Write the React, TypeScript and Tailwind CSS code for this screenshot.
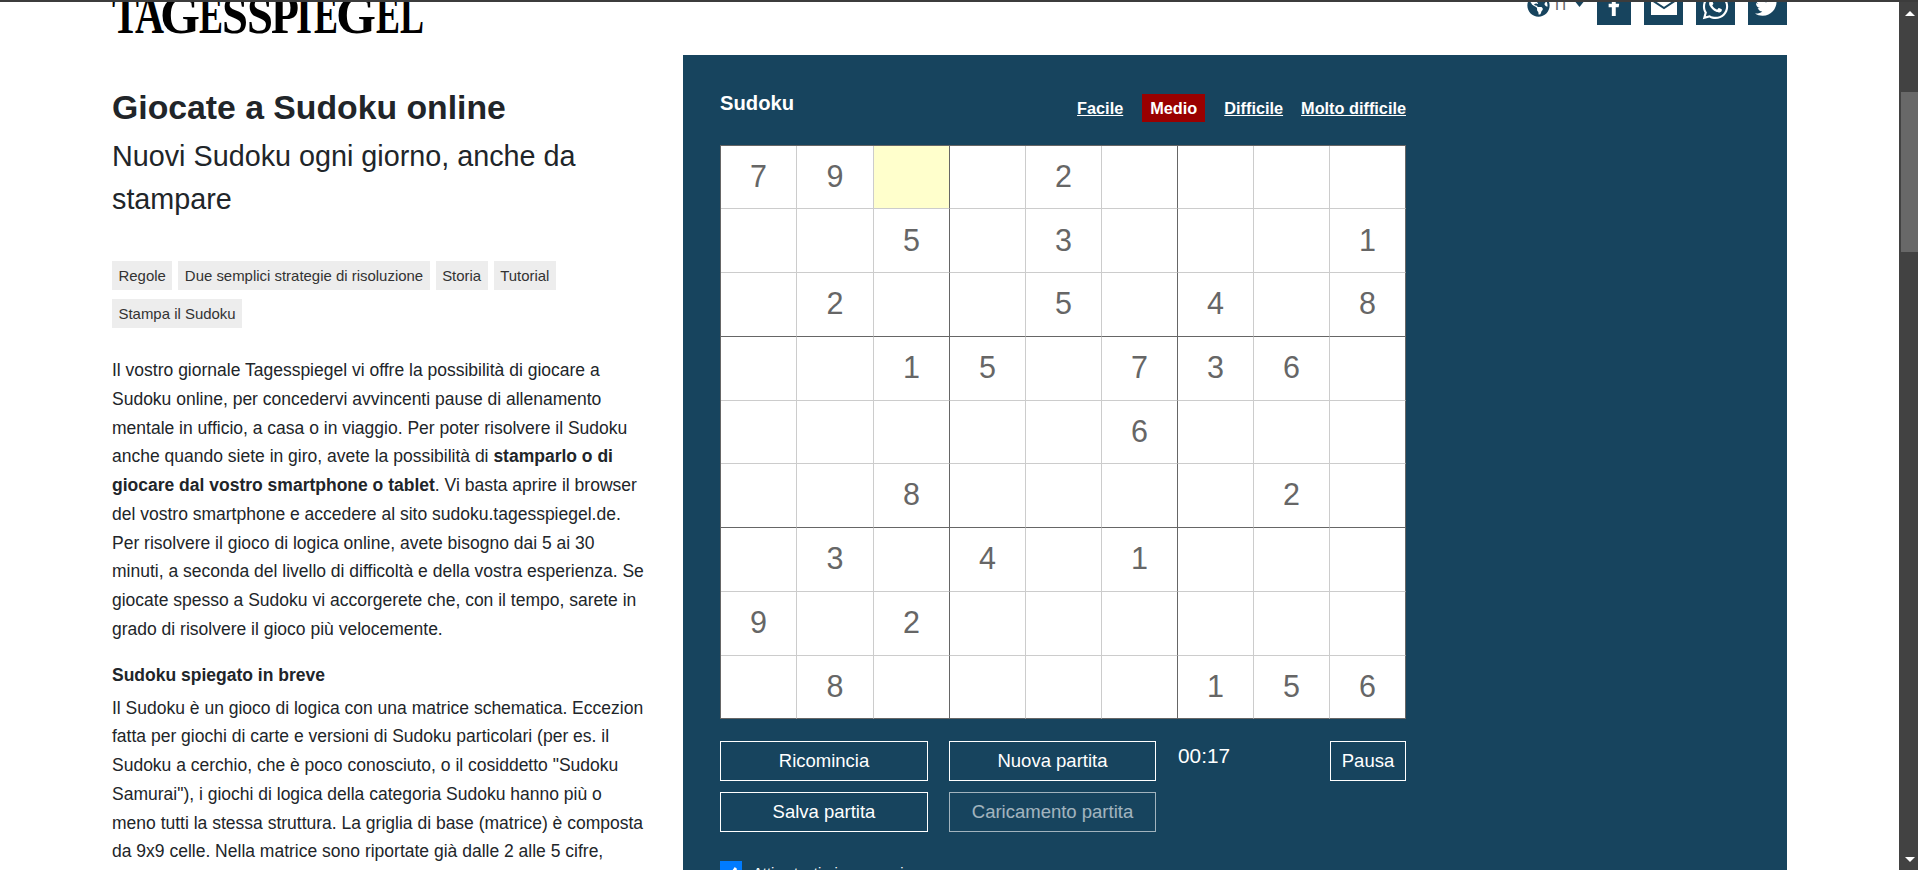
import React from "react";
import { FaFacebookF, FaGlobeAmericas, FaTwitter, FaWhatsapp } from "react-icons/fa";

const ROWS = [
  "79..2....",
  "..5.3...1",
  ".2..5.4.8",
  "..15.736.",
  ".....6...",
  "..8....2.",
  ".3.4.1...",
  "9.2......",
  ".8....156",
];

const TAGS = ["Regole", "Due semplici strategie di risoluzione", "Storia", "Tutorial", "Stampa il Sudoku"];

function Board() {
  return (
    <div className="mt-[21px] grid h-[574px] w-[686px] grid-cols-[76px_77px_76px_76px_76px_76px_76px_76px_76px] grid-rows-[63px_64px_64px_64px_63px_64px_64px_64px_63px] border-t border-l border-[#666] bg-white text-[30.5px] leading-none text-[#666]">
      {ROWS.map((row, r) =>
        row.split("").map((v, c) => (
          <div
            key={`${r}-${c}`}
            className={[
              "flex items-center justify-center border-r border-b",
              r === 1 ? "pb-[1px]" : "pb-[2px]",
              c % 3 === 2 ? "border-r-[#666]" : "border-r-[#ccc]",
              r % 3 === 2 ? "border-b-[#666]" : "border-b-[#ccc]",
              r === 0 && c === 2 ? "bg-[#ffffcc]" : "",
            ].join(" ")}
          >
            {v === "." ? "" : v}
          </div>
        ))
      )}
    </div>
  );
}

// Each letter of the wordmark with its left edge and its drawn width.
const WORDMARK: [string, number, number][] = [
  ["T", 0, 27],
  ["A", 23, 29],
  ["G", 48, 40],
  ["E", 87, 24],
  ["S", 110, 26],
  ["S", 135, 26],
  ["P", 159, 28],
  ["I", 184, 16],
  ["E", 202, 24],
  ["G", 224, 40],
  ["E", 264, 24],
  ["L", 288, 24],
];

function Logo() {
  return (
    <svg className="h-[40px] w-[320px]" viewBox="0 2 320 40">
      {WORDMARK.map(([ch, x, w], i) => (
        <text
          key={i}
          x={x}
          y="33"
          textLength={w}
          lengthAdjust="spacingAndGlyphs"
          fontFamily="Liberation Serif, serif"
          fontWeight="bold"
          fontSize="54"
          fill="#000"
        >
          {ch}
        </text>
      ))}
    </svg>
  );
}

const SHARE = "-mt-4 flex h-[39px] items-end justify-center bg-[#17445e] text-white";

function Header() {
  return (
    <header className="flex h-[53px] w-[1675px] shrink-0 items-start justify-between">
      <Logo />
      <div className="flex items-start">
        <FaGlobeAmericas className="-mt-[8px] size-[23px] text-[#17445e]" />
        <span className="-mt-[8px] ml-[5px] text-[16px] leading-[22px] text-[#666]">IT</span>
        <svg className="mt-0 ml-[6px] h-[5px] w-[9px]" viewBox="0 0 9 5">
          <path d="M0.500 0h8L4.500 5z" fill="#17445e" />
        </svg>
        <a className={SHARE + " ml-[13px] w-[34px] pb-[9px]"}>
          <FaFacebookF className="size-5" />
        </a>
        <a className={SHARE + " ml-[13px] w-[39px] pb-[10px]"}>
          <svg className="h-[20px] w-[26px]" viewBox="0 0 26 20">
            <rect width="26" height="20" fill="#fff" />
            <path d="M0 4.500l13 8.500 13-8.500" fill="none" stroke="#17445e" strokeWidth="2" />
          </svg>
        </a>
        <a className={SHARE + " ml-[13px] w-[39px] pb-[4px]"}>
          <FaWhatsapp className="size-[29px]" />
        </a>
        <a className={SHARE + " ml-[13px] w-[39px] pr-[1px] pb-[7px]"}>
          <FaTwitter className="size-[24px]" />
        </a>
      </div>
    </header>
  );
}

function Article() {
  return (
    <div className="w-[571px] shrink-0 text-[#212529]">
      <h1 className="mt-[27px] text-[33.75px] leading-[50px] font-bold whitespace-nowrap">Giocate a Sudoku online</h1>
      <h2 className="mt-[3px] text-[28.75px] leading-[43px]">
        Nuovi Sudoku ogni giorno, anche da
        <br />
        stampare
      </h2>
      <div className="mt-[40px] flex w-[500px] flex-wrap gap-x-[6px] gap-y-[9px]">
        {TAGS.map((t) => (
          <span key={t} className="h-[29px] bg-[#ededed] px-[6.5px] text-[14.95px] leading-[29px] whitespace-nowrap text-[#333]">
            {t}
          </span>
        ))}
      </div>
      <p className="mt-[28px] text-[17.5px] leading-[28.75px] whitespace-nowrap">
        Il vostro giornale Tagesspiegel vi offre la possibilità di giocare a<br />
        Sudoku online, per concedervi avvincenti pause di allenamento<br />
        mentale in ufficio, a casa o in viaggio. Per poter risolvere il Sudoku<br />
        anche quando siete in giro, avete la possibilità di <b>stamparlo o di</b><br />
        <b>giocare dal vostro smartphone o tablet</b>. Vi basta aprire il browser<br />
        del vostro smartphone e accedere al sito sudoku.tagesspiegel.de.<br />
        Per risolvere il gioco di logica online, avete bisogno dai 5 ai 30<br />
        minuti, a seconda del livello di difficoltà e della vostra esperienza. Se<br />
        giocate spesso a Sudoku vi accorgerete che, con il tempo, sarete in<br />
        grado di risolvere il gioco più velocemente.
      </p>
      <h3 className="mt-[18px] text-[17.5px] leading-[27px] font-bold">Sudoku spiegato in breve</h3>
      <p className="mt-[5px] text-[17.5px] leading-[28.75px] whitespace-nowrap">
        Il Sudoku è un gioco di logica con una matrice schematica. Eccezion<br />
        fatta per giochi di carte e versioni di Sudoku particolari (per es. il<br />
        Sudoku a cerchio, che è poco conosciuto, o il cosiddetto "Sudoku<br />
        Samurai"), i giochi di logica della categoria Sudoku hanno più o<br />
        meno tutti la stessa struttura. La griglia di base (matrice) è composta<br />
        da 9x9 celle. Nella matrice sono riportate già dalle 2 alle 5 cifre,
      </p>
    </div>
  );
}

const BTN = "h-10 border border-white text-[18.5px] leading-[38px] text-white";

function Game() {
  return (
    <section className="h-[815px] w-[1104px] shrink-0 overflow-hidden bg-[#17445e] pl-[37px] text-white">
      <div className="flex h-[69px] w-[686px] items-end justify-between">
        <h2 className="mb-[7px] text-[20.2px] leading-[28px] font-bold">Sudoku</h2>
        <nav className="mb-[2px] flex items-center text-[16.3px] leading-[28px] font-bold">
          <a className="underline">Facile</a>
          <a className="ml-[19px] bg-[#990000] px-2">Medio</a>
          <a className="ml-[19px] underline">Difficile</a>
          <a className="ml-[18px] underline">Molto difficile</a>
        </nav>
      </div>
      <Board />
      <div className="mt-[22px] flex w-[686px]">
        <div className="grid grid-cols-[208px_207px] gap-x-[21px] gap-y-[11px]">
          <button className={BTN}>Ricomincia</button>
          <button className={BTN}>Nuova partita</button>
          <button className={BTN}>Salva partita</button>
          <button className={BTN + " opacity-60"}>Caricamento partita</button>
        </div>
        <span className="ml-[22px] text-[20.8px] leading-[30px]">00:17</span>
        <button className={BTN + " ml-auto w-[76px]"}>Pausa</button>
      </div>
      <label className="mt-[29px] flex items-start">
        <span className="flex size-[22px] items-center justify-center bg-[#007bff]">
          <svg viewBox="0 0 22 22" className="size-[22px]" fill="none" stroke="white" strokeWidth="3">
            <path d="M6 11l4 4 6-8" />
          </svg>
        </span>
        <span className="mt-[1px] ml-[11px] text-[14.8px] leading-[22px] whitespace-nowrap">Attiva tastierino numerico</span>
      </label>
    </section>
  );
}

function Scrollbar() {
  return (
    <div className="flex w-[19px] flex-col bg-[#424242] pl-[2px]">
      <div className="flex h-[90px] shrink-0 items-start pt-[9px] pl-[4px]">
        <svg className="h-[5px] w-[10px]" viewBox="0 0 10 5">
          <path d="M5 0l5 5H0z" fill="#fff" />
        </svg>
      </div>
      <div className="h-[160px] bg-[#686868]" />
      <div className="flex grow items-end pb-[8px] pl-[4px]">
        <svg className="h-[5px] w-[10px]" viewBox="0 0 10 5">
          <path d="M0 0h10L5 5z" fill="#fff" />
        </svg>
      </div>
    </div>
  );
}

export default function App() {
  return (
    <div className="flex h-[870px] w-[1918px] overflow-hidden border-t-2 border-[#3c3c3c] bg-white font-['Liberation_Sans',Arial,sans-serif]">
      <div className="flex h-[868px] w-[1899px] flex-col overflow-hidden pl-[112px]">
        <Header />
        <main className="flex">
          <Article />
          <Game />
        </main>
      </div>
      <Scrollbar />
    </div>
  );
}
